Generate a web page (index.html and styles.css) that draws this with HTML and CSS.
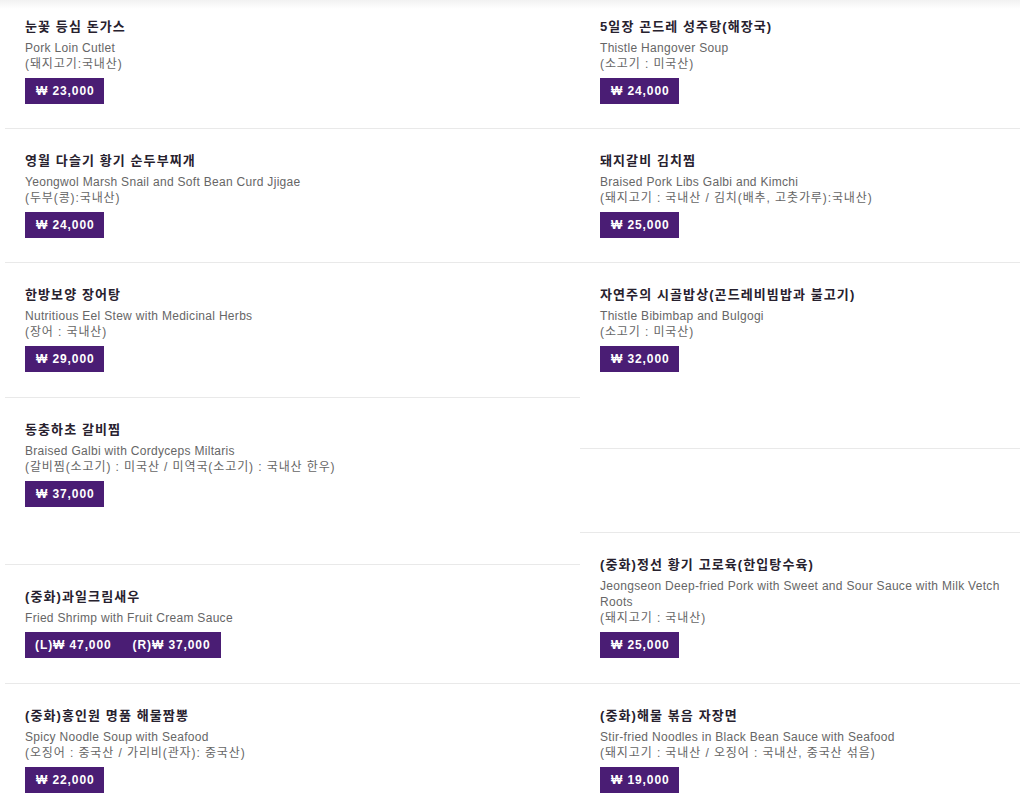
FILE: index.html
```html
<!DOCTYPE html>
<html lang="ko">
<head>
<meta charset="utf-8">
<title>메뉴</title>
<link rel="stylesheet" href="styles.css">
</head>
<body>
<div class="menu">
  <div class="col col-left">
    <div class="item">
      <div class="name">눈꽃 등심 돈가스</div>
      <div class="desc">Pork Loin Cutlet</div>
      <div class="desc origin">(돼지고기:국내산)</div>
      <div class="price"><span>₩ 23,000</span></div>
    </div>
    <div class="item">
      <div class="name">영월 다슬기 황기 순두부찌개</div>
      <div class="desc">Yeongwol Marsh Snail and Soft Bean Curd Jjigae</div>
      <div class="desc origin">(두부(콩):국내산)</div>
      <div class="price"><span>₩ 24,000</span></div>
    </div>
    <div class="item item-loose">
      <div class="name">한방보양 장어탕</div>
      <div class="desc">Nutritious Eel Stew with Medicinal Herbs</div>
      <div class="desc origin">(장어 : 국내산)</div>
      <div class="price"><span>₩ 29,000</span></div>
    </div>
    <div class="item item-tall">
      <div class="name">동충하초 갈비찜</div>
      <div class="desc">Braised Galbi with Cordyceps Miltaris</div>
      <div class="desc origin">(갈비찜(소고기) : 미국산 / 미역국(소고기) : 국내산 한우)</div>
      <div class="price"><span>₩ 37,000</span></div>
    </div>
    <div class="item item-loose">
      <div class="name">(중화)과일크림새우</div>
      <div class="desc">Fried Shrimp with Fruit Cream Sauce</div>
      <div class="price price-double"><span>(L)₩ 47,000</span><span>(R)₩ 37,000</span></div>
    </div>
    <div class="item">
      <div class="name">(중화)홍인원 명품 해물짬뽕</div>
      <div class="desc">Spicy Noodle Soup with Seafood</div>
      <div class="desc origin">(오징어 : 중국산 / 가리비(관자): 중국산)</div>
      <div class="price"><span>₩ 22,000</span></div>
    </div>
  </div>
  <div class="col col-right">
    <div class="item">
      <div class="name">5일장 곤드레 성주탕(해장국)</div>
      <div class="desc">Thistle Hangover Soup</div>
      <div class="desc origin">(소고기 : 미국산)</div>
      <div class="price"><span>₩ 24,000</span></div>
    </div>
    <div class="item">
      <div class="name">돼지갈비 김치찜</div>
      <div class="desc">Braised Pork Libs Galbi and Kimchi</div>
      <div class="desc origin">(돼지고기 : 국내산 / 김치(배추, 고춧가루):국내산)</div>
      <div class="price"><span>₩ 25,000</span></div>
    </div>
    <div class="item item-taller">
      <div class="name">자연주의 시골밥상(곤드레비빔밥과 불고기)</div>
      <div class="desc">Thistle Bibimbap and Bulgogi</div>
      <div class="desc origin">(소고기 : 미국산)</div>
      <div class="price"><span>₩ 32,000</span></div>
    </div>
    <div class="item item-empty"></div>
    <div class="item item-loose">
      <div class="name">(중화)정선 황기 고로육(한입탕수육)</div>
      <div class="desc">Jeongseon Deep-fried Pork with Sweet and Sour Sauce with Milk Vetch Roots</div>
      <div class="desc origin">(돼지고기 : 국내산)</div>
      <div class="price"><span>₩ 25,000</span></div>
    </div>
    <div class="item">
      <div class="name">(중화)해물 볶음 자장면</div>
      <div class="desc">Stir-fried Noodles in Black Bean Sauce with Seafood</div>
      <div class="desc origin">(돼지고기 : 국내산 / 오징어 : 국내산, 중국산 섞음)</div>
      <div class="price"><span>₩ 19,000</span></div>
    </div>
  </div>
</div>
</body>
</html>
```

FILE: styles.css
```css
html, body {
  margin: 0;
  padding: 0;
}

body {
  background: linear-gradient(to bottom, #f2f2f2 0, #ffffff 9px) no-repeat #ffffff;
  font-family: "Liberation Sans", "Noto Sans CJK KR", sans-serif;
  color: #666666;
  overflow: hidden;
}

.menu {
  display: grid;
  grid-template-columns: 575px 440px;
  margin: -5px 0 0 5px;
  align-items: start;
}

.col {
  display: flex;
  flex-direction: column;
}

.item {
  padding: 24px 0 24px 20px;
  border-bottom: 1px solid #e9e9e9;
}

.item-loose {
  padding-bottom: 25px;
}

.item-tall {
  padding-bottom: 57px;
}

.item-taller {
  padding-bottom: 76px;
}

.item-empty {
  height: 84px;
  padding: 0;
  box-sizing: border-box;
}

.name {
  font-size: 13px;
  font-weight: bold;
  line-height: 16px;
  color: #27212e;
  margin-bottom: 5px;
  letter-spacing: 1.1px;
}

.desc {
  font-size: 12px;
  line-height: 16px;
  color: #666666;
  letter-spacing: 0.3px;
}

.origin {
  letter-spacing: 0.9px;
}

.price {
  display: flex;
  gap: 21px;
  width: fit-content;
  margin-top: 6px;
  height: 26px;
  line-height: 26px;
  padding: 0 9px 0 11px;
  background: #4a1d74;
  color: #ffffff;
  font-size: 12px;
  font-weight: bold;
  letter-spacing: 0.9px;
}

.price-double {
  padding: 0 10px;
}
```
